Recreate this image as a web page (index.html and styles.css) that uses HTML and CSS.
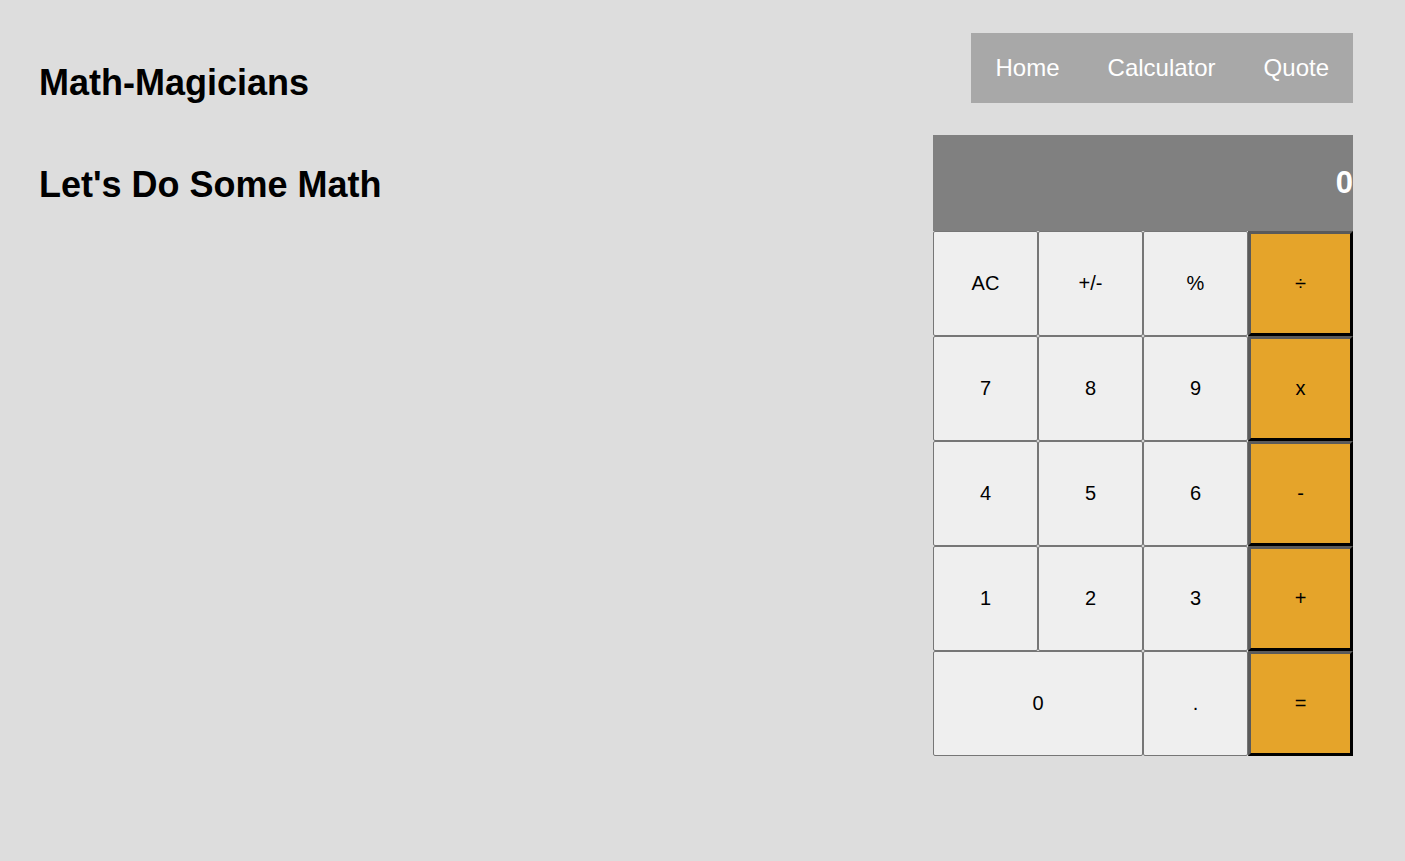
FILE: index.html
```html
<!DOCTYPE html>
<html lang="en">
<head>
<meta charset="utf-8">
<title>Math-Magicians</title>
<link rel="stylesheet" href="styles.css">
</head>
<body>
<div class="page">
  <header class="top">
    <h1 class="brand">Math-Magicians</h1>
    <nav class="nav">
      <a class="nav-link" href="#">Home</a>
      <a class="nav-link" href="#">Calculator</a>
      <a class="nav-link" href="#">Quote</a>
    </nav>
  </header>
  <main class="main">
    <h2 class="subtitle">Let's Do Some Math</h2>
    <div class="calc">
      <div class="display">0</div>
      <button class="key" type="button">AC</button>
      <button class="key" type="button">+/-</button>
      <button class="key" type="button">%</button>
      <button class="key op" type="button">÷</button>
      <button class="key" type="button">7</button>
      <button class="key" type="button">8</button>
      <button class="key" type="button">9</button>
      <button class="key op" type="button">x</button>
      <button class="key" type="button">4</button>
      <button class="key" type="button">5</button>
      <button class="key" type="button">6</button>
      <button class="key op" type="button">-</button>
      <button class="key" type="button">1</button>
      <button class="key" type="button">2</button>
      <button class="key" type="button">3</button>
      <button class="key op" type="button">+</button>
      <button class="key zero" type="button">0</button>
      <button class="key" type="button">.</button>
      <button class="key op" type="button">=</button>
    </div>
  </main>
</div>
</body>
</html>
```

FILE: styles.css
```css
html, body {
  margin: 0;
  padding: 0;
}

body {
  background: #dddddd;
  font-family: "Liberation Sans", Arial, sans-serif;
  color: #000;
}

.page {
  padding: 33px 52px 0 39px;
}

.top {
  display: flex;
  justify-content: space-between;
  align-items: flex-start;
}

.brand {
  margin: 29px 0 0;
  font-size: 36px;
  line-height: 41px;
  font-weight: bold;
}

.nav {
  display: flex;
  align-items: center;
  height: 70px;
  padding-left: 1px;
  background: #a8a8a8;
}

.nav-link {
  padding: 0 24px;
  font-size: 24px;
  color: #fff;
  text-decoration: none;
}

.main {
  display: flex;
  justify-content: space-between;
  align-items: flex-start;
  margin-top: 32px;
}

.subtitle {
  margin: 29px 0 0;
  font-size: 36px;
  font-weight: bold;
}

.calc {
  display: grid;
  grid-template-columns: repeat(4, 105px);
  grid-template-rows: 96px repeat(5, 105px);
}

.display {
  grid-column: 1 / 5;
  background: #808080;
  color: #fff;
  font-size: 31px;
  font-weight: bold;
  display: flex;
  align-items: center;
  justify-content: flex-end;
  padding-right: 0;
}

.key {
  box-sizing: border-box;
  margin: 0;
  width: 100%;
  height: 100%;
  background: #efefef;
  border: 1px solid #767676;
  border-radius: 2px;
  font-family: "Liberation Sans", Arial, sans-serif;
  font-size: 20px;
  color: #000;
  padding: 0;
}

.key.op {
  background: #e5a42a;
  border-radius: 0;
  border-width: 3px;
  border-style: solid;
  border-color: #5a5a5a #000 #000 #5a5a5a;
}

.key.zero {
  grid-column: span 2;
}
```
